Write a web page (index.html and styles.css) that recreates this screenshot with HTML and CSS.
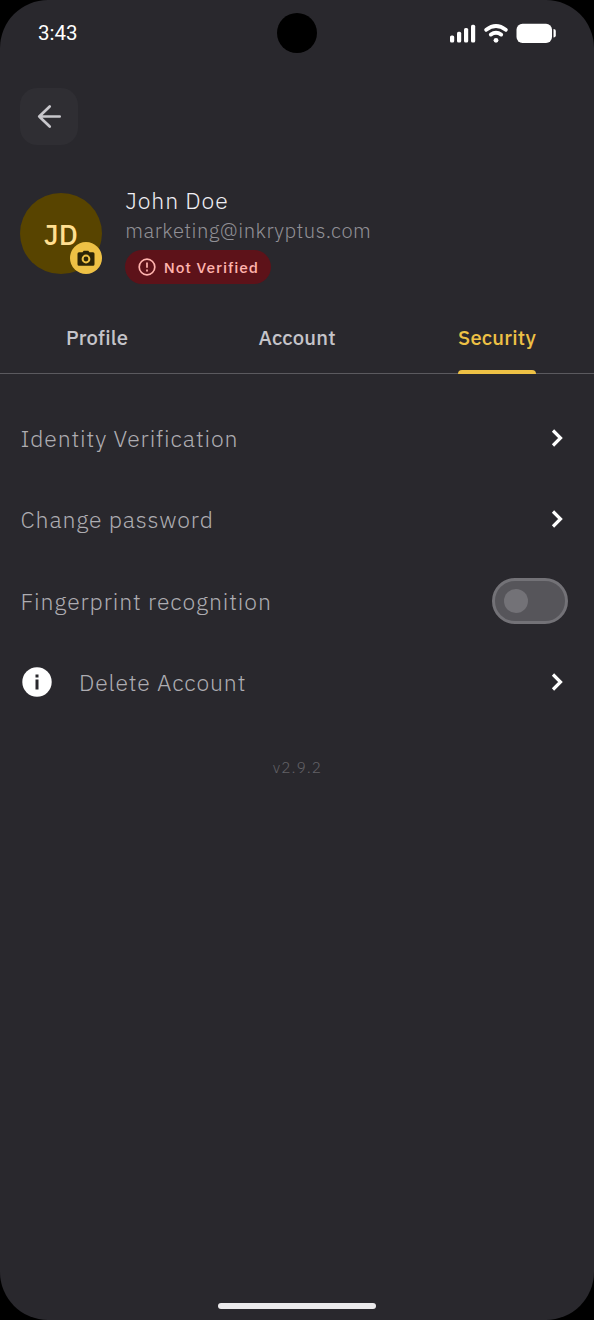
FILE: index.html
```html
<!DOCTYPE html>
<html lang="en">
<head>
<meta charset="utf-8">
<title>Security</title>
<link rel="stylesheet" href="styles.css">
</head>
<body>
<main class="phone">
  <header class="status">
    <span class="time">3:43</span>
    <span class="camera-hole"></span>
    <svg class="indicators" width="108" height="22" viewBox="0 0 108 22" fill="#fff">
      <rect x="1" y="13.500" width="4.200" height="7" rx="1.600"/><rect x="8" y="9.800" width="4.200" height="10.700" rx="1.600"/><rect x="15" y="6" width="4.200" height="14.500" rx="1.600"/><rect x="22" y="2.800" width="4.200" height="17.700" rx="1.600"/>
      <g fill="none" stroke="#fff" stroke-width="3.800" stroke-linecap="round"><path d="M37.200 7.800q9.800-7.600 19.600 0"/><path d="M41.800 12.600q5.200-3.600 10.400 0"/></g>
      <circle cx="47" cy="18.300" r="2.400"/>
      <rect x="67.500" y="1.700" width="35.500" height="19.300" rx="6"/><path d="M104.500 7q2.300 0 2.300 2v4.500q0 2-2.300 2z"/>
    </svg>
  </header>
  <button class="back" aria-label="Back">
    <svg width="28" height="28" viewBox="0 0 28 28" fill="none" stroke="#c8c7cc" stroke-width="2.700" stroke-linecap="round" stroke-linejoin="round"><path d="M24.700 13.500H4.200M14.700 3.500L4.200 13.500l10.500 10"/></svg>
  </button>
  <section class="user">
    <div class="avatar"><span class="initials">JD</span>
      <span class="edit"><svg width="18" height="17" viewBox="0 0 18 17"><path fill="#2c2407" fill-rule="evenodd" d="M2 2.200h3.500L6.700.8h4.600l1.200 1.400H16q1.500 0 1.500 1.500v10.600q0 1.500-1.500 1.500H2q-1.500 0-1.500-1.500V3.700Q.5 2.200 2 2.200zM9 4.600a4.400 4.400 0 100 8.800 4.400 4.400 0 000-8.800zm0 2a2.400 2.400 0 110 4.800 2.400 2.400 0 010-4.800z"/></svg></span>
    </div>
    <div class="details">
      <span class="name">John Doe</span>
      <span class="email">marketing@inkryptus.com</span>
      <span class="badge"><svg width="18" height="18" viewBox="0 0 18 18" fill="none" stroke="#ffb3ae" stroke-width="1.700"><circle cx="9" cy="9" r="7.800"/><path d="M9 4.600v5.200M9 11.600v1.800"/></svg><span>Not Verified</span></span>
    </div>
  </section>
  <nav class="tabs">
    <a class="tab">Profile</a>
    <a class="tab middle">Account</a>
    <a class="tab active">Security</a>
  </nav>
  <ul class="list">
    <li class="row"><span class="lift">Identity Verification</span><svg class="chev" width="14" height="20" viewBox="0 0 14 20"><path d="M3 2.500l7.500 7.500L3 17.500"/></svg></li>
    <li class="row"><span class="lift">Change password</span><svg class="chev" width="14" height="20" viewBox="0 0 14 20"><path d="M3 2.500l7.500 7.500L3 17.500"/></svg></li>
    <li class="row"><span>Fingerprint recognition</span><span class="toggle"><span class="knob"></span></span></li>
    <li class="row"><svg class="info" width="30" height="30" viewBox="0 0 30 30"><circle cx="15" cy="15" r="14.700" fill="#fff"/><path fill="#29282d" d="M13.500 7.500h3v3h-3zM13.500 12.500h3v10h-3z"/></svg><span>Delete Account</span><svg class="chev" width="14" height="20" viewBox="0 0 14 20"><path d="M3 2.500l7.500 7.500L3 17.500"/></svg></li>
  </ul>
  <p class="version">v2.9.2</p>
  <span class="home-bar"></span>
</main>
</body>
</html>
```
FILE: styles.css
```css
* { box-sizing: border-box; }
body { margin: 0; background: #000; font-family: "IBM Plex Sans", Roboto, sans-serif; }
.phone { width: 594px; height: 1320px; background: #29282d; border-radius: 48px; display: flex; flex-direction: column; overflow: hidden; }
.status { height: 66px; flex: none; display: grid; grid-template-columns: 1fr 40px 1fr; align-items: center; padding: 0 37px; }
.time { color: #fff; font: 400 20.500px/24px Roboto, sans-serif; padding-left: 1px; }
.camera-hole { width: 40px; height: 40px; border-radius: 50%; background: #000; }
.indicators { justify-self: end; }
.back { margin: 22px 0 0 20px; width: 58px; height: 57px; flex: none; border: 0; border-radius: 17px; background: #2f2e33; padding: 0; display: grid; place-items: center; }
.user { display: flex; gap: 23px; margin: 41px 0 0 20px; height: 98px; }
.avatar { position: relative; width: 82px; height: 81px; margin-top: 7px; border-radius: 50%; background: #584400; display: grid; place-items: center; }
.initials { color: #ffdf90; font-size: 28px; font-weight: 500; line-height: 32px; letter-spacing: .3px; padding-top: 2px; }
.edit { position: absolute; right: 0; bottom: 0; width: 32px; height: 32px; border-radius: 50%; background: #eec145; display: grid; place-items: center; }
.details { display: flex; flex-direction: column; align-items: flex-start; }
.name { color: #f0eff4; font-size: 23px; font-weight: 300; line-height: 28px; letter-spacing: .9px; padding-left: .5px; }
.email { color: #919096; font-size: 20.250px; font-weight: 300; line-height: 34px; letter-spacing: .46px; padding-left: .3px; }
.badge { margin-top: 2px; height: 34px; width: 146px; border-radius: 17px; background: #5d1219; color: #ffb3ae; display: flex; align-items: center; padding-left: 13px; gap: 7.700px; font-size: 15.500px; font-weight: 500; letter-spacing: .92px; white-space: nowrap; }
.tabs { margin-top: 20px; height: 70px; flex: none; display: flex; justify-content: space-between; padding: 0 58px 0 66px; border-bottom: 1px solid #5b5a5f; }
.tab { height: 70px; display: flex; padding-top: 19px; position: relative; color: #c5c4c9; font-size: 20.250px; line-height: 30px; font-weight: 500; letter-spacing: .2px; }
.middle { margin-left: 8px; }
.active { color: #eec145; }
.active::after { content: ""; position: absolute; left: 0; right: 0; bottom: 0; height: 4px; border-radius: 4px 4px 0 0; background: #eec145; }
.list { list-style: none; margin: 24px 0 0; padding: 0 26px 0 20.500px; }
.row { height: 81.250px; display: flex; align-items: center; color: #aeadb2; font-size: 23px; font-weight: 300; letter-spacing: .87px; }
.lift { padding-bottom: 1px; }
.chev { margin: -1px 4.500px 0 auto; fill: none; stroke: #fff; stroke-width: 3.200; }
.info { margin: 0 27.500px 0 1px; }
.toggle { margin-left: auto; width: 76px; height: 46px; border: 3px solid #737277; border-radius: 23px; background: #56555a; display: flex; align-items: center; padding-left: 9px; }
.knob { width: 24px; height: 24px; border-radius: 50%; background: #737277; }
.version { margin: 32px 0 0; text-align: center; color: #626166; font-size: 15.500px; font-weight: 300; line-height: 24px; letter-spacing: 1px; padding-left: 1px; }
.home-bar { margin: auto auto 11px; width: 158px; height: 6px; border-radius: 3px; background: #ebeaec; flex: none; }
```
